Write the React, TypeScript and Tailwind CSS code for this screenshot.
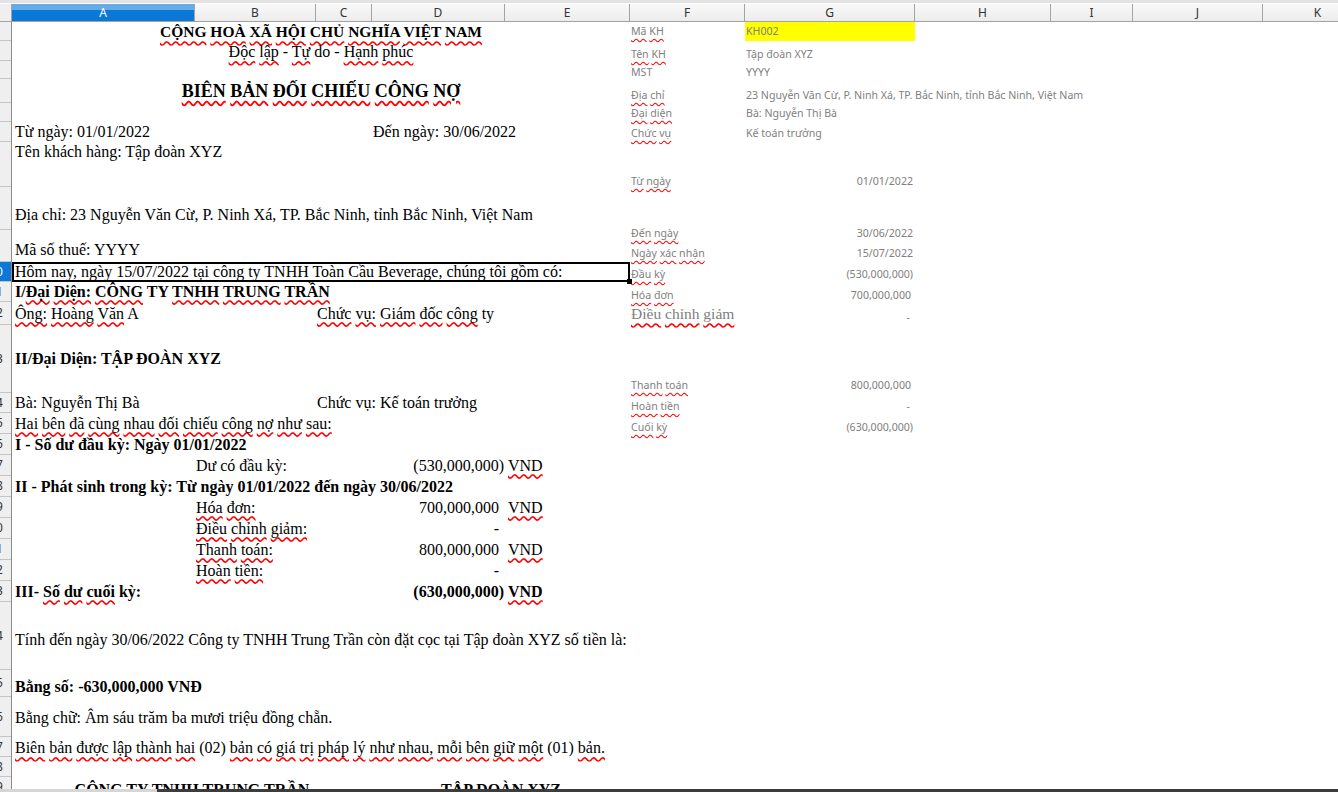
import React from "react";

// spreadsheet columns: [name, width class]
const columns: [string, string][] = [
  ["A", "w-[183px]"],
  ["B", "w-[121px]"],
  ["C", "w-[56px]"],
  ["D", "w-[133px]"],
  ["E", "w-[125px]"],
  ["F", "w-[115px]"],
  ["G", "w-[170px]"],
  ["H", "w-[136px]"],
  ["I", "w-[82px]"],
  ["J", "w-[130px]"],
  ["K", "w-[110px]"],
];

const rowHeights: string[] = [
  "h-[19px]", "h-[20px]", "h-[18px]", "h-[24px]", "h-[19px]", "h-[20px]", "h-[45px]", "h-[43px]", "h-[32px]",
  "h-[20px]", "h-[20px]", "h-[23px]", "h-[68px]", "h-[20px]",
  "h-[21px]", "h-[21px]", "h-[21px]", "h-[21px]", "h-[21px]", "h-[21px]", "h-[21px]", "h-[21px]", "h-[21px]",
  "h-[68px]", "h-[27px]", "h-[40px]", "h-[20px]", "h-[20px]", "h-[20px]",
];

// part of a word after ~ gets the red spell-check squiggle
const Words = ({t}: {t: string}) => (
  <span>
    {t.split(" ").map((p, i) => {
      const at = p.indexOf("~");
      const head = at >= 0 ? p.slice(0, at) : p;
      const marked = at >= 0 ? p.slice(at + 1) : "";
      return (
        <React.Fragment key={i}>
          {i > 0 ? " " : ""}
          {head}
          {marked && <span className="underline decoration-wavy decoration-[#ff0000] underline-offset-[3px]">{marked}</span>}
        </React.Fragment>
      );
    })}
  </span>
);

const grid = "grid grid-cols-[183px_121px_56px_133px_125px] items-center whitespace-nowrap";

type AmountProps = {
  label: string,
  amount: string,
  neg?: boolean,
  unit?: boolean,
}

const AmountRow = ({label, amount, neg, unit = true}: AmountProps) => (
  <div className={`${grid} h-[21px]`}>
    <div className="col-start-2 col-span-2 pl-[1px]"><Words t={label}/></div>
    <div className={`col-start-4 text-right ${neg ? "pr-[1px]" : "pr-[6px]"}`}>{amount}</div>
    {unit && <div className="col-start-5 pl-[3px]"><Words t="~VND"/></div>}
  </div>
);

type InfoProps = {
  label: string,
  value?: string,
  h: string,
  mt?: string,
  right?: string,
  yellow?: boolean,
}

const InfoRow = ({label, value, h, mt = "", right, yellow}: InfoProps) => (
  <div className={`flex items-center whitespace-nowrap ${h} ${mt}`}>
    <div className="w-[115px] pl-[1px]"><Words t={label}/></div>
    <div className={`w-[170px] h-full flex items-center ${right ? `justify-end ${right}` : "pl-[1px]"} ${yellow ? "bg-[#ffff00]" : ""}`}>
      {value}
    </div>
  </div>
);

export default function App() {
  return (
    <div className="w-[1338px] h-[792px] overflow-hidden bg-white flex flex-col font-['Noto_Sans',sans-serif]">
      {/* top strip */}
      <div className="h-[4px] bg-[#e3e3e3] border-b border-white shrink-0"/>

      {/* column headers */}
      <div className="h-[18px] flex shrink-0 border-b border-[#a3a3a3] text-[12px] text-[#333]">
        <div className="w-[12px] shrink-0 bg-[#efefef] border-r border-[#a3a3a3]"/>
        {columns.map(([name, w]) =>
          name === "A"
            ? <div key={name}
                   className={`${w} shrink-0 flex items-center justify-center text-white bg-[linear-gradient(to_bottom,#64abe8_0%,#64abe8_38%,#0a78d6_38%,#0a78d6_100%)] border-r border-[#a3a3a3]`}>{name}</div>
            : <div key={name}
                   className={`${w} shrink-0 flex items-center justify-center bg-[linear-gradient(to_bottom,#f9f9f9,#ececec)] border-r border-[#a3a3a3]`}>{name}</div>
        )}
      </div>

      <div className="flex-1 flex overflow-hidden">
        {/* row headers, left part is cut off */}
        <div className="w-[12px] shrink-0 flex flex-col bg-[#efefef] border-r border-[#8c8c8c] overflow-hidden">
          {rowHeights.map((h, i) => (
            <div key={i}
                 className={`${h} shrink-0 flex items-center border-b border-[#c4c4c4] ${i === 9 ? "bg-[#0a78d6] text-white" : "text-[#333]"}`}>
              <div className="w-[32px] -ml-[20px] shrink-0 text-center text-[12px]">{i + 1}</div>
            </div>
          ))}
        </div>

        {/* document A:E */}
        <div className="w-[618px] shrink-0 flex flex-col *:shrink-0 text-black font-['Liberation_Serif',serif] text-[16px] leading-none">
          <div className="h-[20px] flex items-center justify-center font-bold text-[15.5px] whitespace-nowrap">
            <Words t="~CỘNG ~HOÀ ~XÃ ~HỘI ~CHỦ ~NGHĨA ~VIỆT ~NAM"/>
          </div>
          <div className="h-[20px] flex items-center justify-center whitespace-nowrap">
            <Words t="~Độc ~lập - ~Tự do - ~Hạnh ~phúc"/>
          </div>
          <div className="h-[17px]"/>
          <div className="h-[24px] flex items-center justify-center font-bold text-[18px] whitespace-nowrap">
            <Words t="~BIÊN ~BẢN ~ĐỐI ~CHIẾU ~CÔNG ~NỢ"/>
          </div>
          <div className="h-[19px]"/>
          <div className={`${grid} h-[20px]`}>
            <div className="col-start-1 col-span-3 pl-[3px]">Từ ngày: 01/01/2022</div>
            <div className="col-start-4 col-span-2 pl-[1px]">Đến ngày: 30/06/2022</div>
          </div>
          <div className="h-[20px] flex items-center pl-[3px] whitespace-nowrap">Tên khách hàng: Tập đoàn XYZ</div>
          <div className="h-[20px] mt-[43px] flex items-center pl-[3px] whitespace-nowrap">
            Địa chỉ: 23 Nguyễn Văn Cừ, P. Ninh Xá, TP. Bắc Ninh, tỉnh Bắc Ninh, Việt Nam
          </div>
          <div className="h-[20px] mt-[15px] flex items-center pl-[3px] whitespace-nowrap">Mã số thuế: YYYY</div>
          <div className="h-[20px] mt-[2px] relative flex items-center pl-[3px] whitespace-nowrap">
            Hôm nay, ngày 15/07/2022 tại công ty TNHH Toàn Cầu Beverage, chúng tôi gồm có:
            <div className="absolute inset-0 border-2 border-black"/>
            <div className="absolute right-[-2px] bottom-[-2px] w-[5px] h-[5px] bg-black"/>
          </div>
          <div className="h-[19px] flex items-center pl-[3px] font-bold whitespace-nowrap">
            <Words t="I/~Đại ~Diện: ~CÔNG TY ~TNHH ~TRUNG ~TRẦN"/>
          </div>
          <div className={`${grid} h-[25px]`}>
            <div className="col-start-1 col-span-2 pl-[3px]"><Words t="~Ông: ~Hoàng ~Văn A"/></div>
            <div className="col-start-3 col-span-3 pl-[1px]"><Words t="~Chức ~vụ: ~Giám ~đốc ~công ty"/></div>
          </div>
          <div className="h-[20px] mt-[23px] flex items-center pl-[3px] font-bold whitespace-nowrap">II/Đại Diện: TẬP ĐOÀN XYZ</div>
          <div className={`${grid} h-[20px] mt-[24px]`}>
            <div className="col-start-1 col-span-2 pl-[3px]">Bà: Nguyễn Thị Bà</div>
            <div className="col-start-3 col-span-3 pl-[1px]">Chức vụ: Kế toán trưởng</div>
          </div>
          <div className="h-[21px] flex items-center pl-[3px] whitespace-nowrap">
            <Words t="~Hai ~bên ~đã ~cùng ~nhau ~đối ~chiếu ~công ~nợ ~như ~sau:"/>
          </div>
          <div className="h-[21px] flex items-center pl-[3px] font-bold whitespace-nowrap">I - Số dư đầu kỳ: Ngày 01/01/2022</div>
          <AmountRow label="Dư có đầu kỳ:" amount="(530,000,000)" neg/>
          <div className="h-[21px] flex items-center pl-[3px] font-bold whitespace-nowrap">
            II - Phát sinh trong kỳ: Từ ngày 01/01/2022 đến ngày 30/06/2022
          </div>
          <AmountRow label="~Hóa ~đơn:" amount="700,000,000"/>
          <AmountRow label="~Điều ~chỉnh ~giảm:" amount="-" unit={false}/>
          <AmountRow label="~Thanh ~toán:" amount="800,000,000"/>
          <AmountRow label="~Hoàn ~tiền:" amount="-" unit={false}/>
          <div className={`${grid} h-[21px] font-bold`}>
            <div className="col-start-1 col-span-3 pl-[3px]"><Words t="III- ~Số ~dư ~cuối kỳ:"/></div>
            <div className="col-start-4 text-right pr-[1px]">(630,000,000)</div>
            <div className="col-start-5 pl-[3px]"><Words t="~VND"/></div>
          </div>
          <div className="h-[20px] mt-[28px] flex items-center pl-[3px] whitespace-nowrap">
            Tính đến ngày 30/06/2022 Công ty TNHH Trung Trần còn đặt cọc tại Tập đoàn XYZ số tiền là:
          </div>
          <div className="h-[20px] mt-[27px] flex items-center pl-[3px] font-bold whitespace-nowrap">Bằng số: -630,000,000 VNĐ</div>
          <div className="h-[20px] mt-[11px] flex items-center pl-[3px] whitespace-nowrap">Bằng chữ: Âm sáu trăm ba mươi triệu đồng chẵn.</div>
          <div className="h-[20px] mt-[10px] flex items-center pl-[3px] whitespace-nowrap">
            <Words t="~Biên ~bản ~được ~lập ~thành ~hai (02) ~bản ~có ~giá ~trị ~pháp ~lý ~như ~nhau, ~mỗi ~bên ~giữ ~một (01) ~bản."/>
          </div>
          <div className="h-[20px] mt-[22px] grid grid-cols-[360px_258px] items-center font-bold whitespace-nowrap">
            <div className="text-center"><Words t="~CÔNG TY ~TNHH ~TRUNG ~TRẦN"/></div>
            <div className="text-center"><Words t="~TẬP ~ĐOÀN XYZ"/></div>
          </div>
        </div>

        {/* lookup panel F:G */}
        <div className="w-[285px] shrink-0 flex flex-col *:shrink-0 text-[10.6px] leading-none text-[#808080]">
          <InfoRow label="~Mã ~KH" value="KH002" h="h-[19px]" yellow/>
          <InfoRow label="~Tên ~KH" value="Tập đoàn XYZ" h="h-[22px]" mt="mt-[2px]"/>
          <InfoRow label="MST" value="YYYY" h="h-[14px]"/>
          <InfoRow label="~Địa ~chỉ" value="23 Nguyễn Văn Cừ, P. Ninh Xá, TP. Bắc Ninh, tỉnh Bắc Ninh, Việt Nam" h="h-[18px]" mt="mt-[7px]"/>
          <InfoRow label="~Đại ~diện" value="Bà: Nguyễn Thị Bà" h="h-[18px]"/>
          <InfoRow label="~Chức ~vụ" value="Kế toán trưởng" h="h-[18px]" mt="mt-[2px]"/>
          <InfoRow label="~Từ ~ngày" value="01/01/2022" h="h-[18px]" mt="mt-[30px]" right="pr-[2px]"/>
          <InfoRow label="~Đến ~ngày" value="30/06/2022" h="h-[18px]" mt="mt-[34px]" right="pr-[2px]"/>
          <InfoRow label="~Ngày ~xác ~nhận" value="15/07/2022" h="h-[18px]" mt="mt-[2px]" right="pr-[2px]"/>
          <InfoRow label="~Đầu ~kỳ" value="(530,000,000)" h="h-[18px]" mt="mt-[3px]" right="pr-[2px]"/>
          <InfoRow label="~Hóa ~đơn" value="700,000,000" h="h-[18px]" mt="mt-[3px]" right="pr-[4px]"/>
          <div className="h-[20px] flex whitespace-nowrap">
            <div className="w-[115px] pl-[1px] flex items-center font-['Liberation_Serif',serif] text-[15.5px]">
              <Words t="~Điều ~chỉnh ~giảm"/>
            </div>
            <div className="w-[170px] flex items-end justify-end pr-[5px] pb-[1px]">-</div>
          </div>
          <InfoRow label="~Thanh ~toán" value="800,000,000" h="h-[18px]" mt="mt-[52px]" right="pr-[4px]"/>
          <InfoRow label="~Hoàn ~tiền" value="-" h="h-[18px]" mt="mt-[3px]" right="pr-[5px]"/>
          <InfoRow label="~Cuối ~kỳ" value="(630,000,000)" h="h-[18px]" mt="mt-[3px]" right="pr-[2px]"/>
        </div>

        <div className="flex-1"/>
      </div>

      {/* bottom scroll strip */}
      <div className="h-[3px] flex shrink-0">
        <div className="w-[157px] bg-[#d6d6d6]"/>
        <div className="flex-1 bg-[#3c3c3c]"/>
      </div>
    </div>
  );
}
